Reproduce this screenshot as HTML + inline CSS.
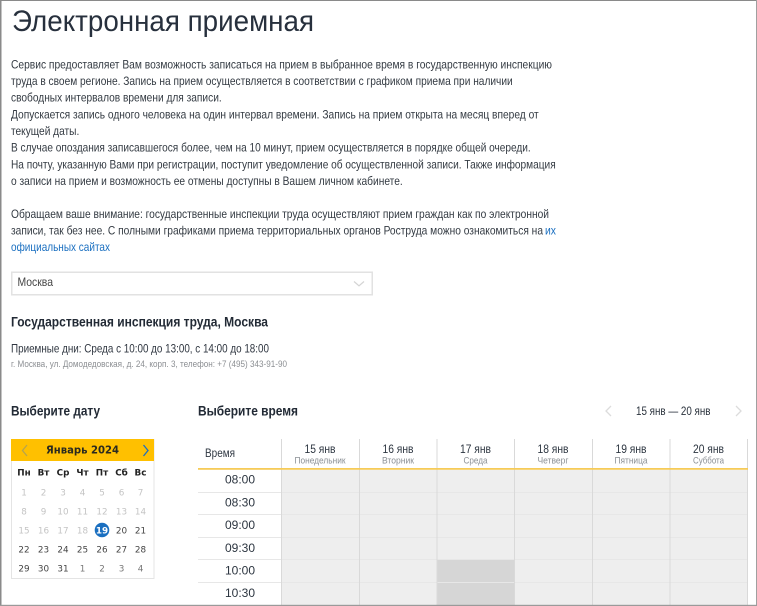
<!DOCTYPE html>
<html lang="ru">
<head>
<meta charset="utf-8">
<title>Электронная приемная</title>
<style>
html,body{margin:0;padding:0;background:#fff}
body{width:757px;height:606px;overflow:hidden}
svg{display:block;filter:blur(.3px)}
text{font-family:"Liberation Sans",sans-serif}
.p{font-size:12px;fill:#333a42}
.h{font-size:14px;font-weight:bold;fill:#222a35}
.t{font-size:12px;fill:#2c3540;text-anchor:middle}
.s{font-size:9.5px;fill:#8a8f94;text-anchor:middle}
.d{font-family:"DejaVu Sans",sans-serif;font-size:8.800px;text-anchor:middle;fill:#444}
.o{fill:#c4c4c4}
.w{font-weight:bold;fill:#222}
</style>
</head>
<body>
<svg width="757" height="606" viewBox="0 0 757 606" xmlns="http://www.w3.org/2000/svg">
<rect width="757" height="606" fill="#fff"/>

<text x="12" y="31" font-size="29.500" fill="#27303d" textLength="302" lengthAdjust="spacingAndGlyphs">Электронная приемная</text>

<text class="p" x="11" y="68.300" textLength="541" lengthAdjust="spacingAndGlyphs">Сервис предоставляет Вам возможность записаться на прием в выбранное время в государственную инспекцию</text>
<text class="p" x="11" y="85" textLength="501.700" lengthAdjust="spacingAndGlyphs">труда в своем регионе. Запись на прием осуществляется в соответствии с графиком приема при наличии</text>
<text class="p" x="11" y="101.700" textLength="210.700" lengthAdjust="spacingAndGlyphs">свободных интервалов времени для записи.</text>
<text class="p" x="11" y="118.300" textLength="527.700" lengthAdjust="spacingAndGlyphs">Допускается запись одного человека на один интервал времени. Запись на прием открыта на месяц вперед от</text>
<text class="p" x="11" y="135" textLength="68.300" lengthAdjust="spacingAndGlyphs">текущей даты.</text>
<text class="p" x="11" y="151.700" textLength="519.700" lengthAdjust="spacingAndGlyphs">В случае опоздания записавшегося более, чем на 10 минут, прием осуществляется в порядке общей очереди.</text>
<text class="p" x="11" y="168.300" textLength="544.700" lengthAdjust="spacingAndGlyphs">На почту, указанную Вами при регистрации, поступит уведомление об осуществленной записи. Также информация</text>
<text class="p" x="11" y="185" textLength="391.700" lengthAdjust="spacingAndGlyphs">о записи на прием и возможность ее отмены доступны в Вашем личном кабинете.</text>

<text class="p" x="11" y="218" textLength="538" lengthAdjust="spacingAndGlyphs">Обращаем ваше внимание: государственные инспекции труда осуществляют прием граждан как по электронной</text>
<text class="p" x="11" y="234.500" textLength="532" lengthAdjust="spacingAndGlyphs">записи, так без нее. С полными графиками приема территориальных органов Роструда можно ознакомиться на</text>
<text class="p" x="545" y="234.500" textLength="11" lengthAdjust="spacingAndGlyphs" style="fill:#1a6fc0">их</text>
<text class="p" x="11" y="251" textLength="99" lengthAdjust="spacingAndGlyphs" style="fill:#1a6fc0">официальных сайтах</text>

<rect x="11.750" y="272.250" width="360.500" height="22.500" fill="#fff" stroke="#e2e2e2" stroke-width="1.500"/>
<text class="p" x="17.500" y="286" textLength="35.500" lengthAdjust="spacingAndGlyphs" style="fill:#444">Москва</text>
<path d="M354 281.500L359 285.800L364 281.500" fill="none" stroke="#d4d4d4" stroke-width="1.200"/>

<text class="h" x="11" y="326.500" textLength="257" lengthAdjust="spacingAndGlyphs">Государственная инспекция труда, Москва</text>
<text class="p" x="11" y="352.500" textLength="258" lengthAdjust="spacingAndGlyphs" style="fill:#2f3640">Приемные дни: Среда с 10:00 до 13:00, с 14:00 до 18:00</text>
<text x="11" y="367" font-size="9.300" fill="#8c8f93" textLength="276" lengthAdjust="spacingAndGlyphs">г. Москва, ул. Домодедовская, д. 24, корп. 3, телефон: +7 (495) 343-91-90</text>

<text class="h" x="11" y="415.500" textLength="89" lengthAdjust="spacingAndGlyphs">Выберите дату</text>
<text class="h" x="198" y="415.500" textLength="100" lengthAdjust="spacingAndGlyphs">Выберите время</text>

<path d="M611 406L606 411L611 416" fill="none" stroke="#dcdcdc" stroke-width="1.300"/>
<text x="636" y="415" font-size="12" fill="#2a323c" textLength="74.500" lengthAdjust="spacingAndGlyphs">15 янв — 20 янв</text>
<path d="M736 406L741 411L736 416" fill="none" stroke="#dcdcdc" stroke-width="1.300"/>

<!-- calendar -->
<rect x="11.500" y="439.500" width="142.500" height="139" fill="#fff" stroke="#e4e4e4"/>
<rect x="11" y="439" width="143" height="22" fill="#ffc000"/>
<path d="M27 445L22.500 450.500L27 456" fill="none" stroke="#b6a44e" stroke-width="1.300"/>
<path d="M143.500 445L148 450.500L143.500 456" fill="none" stroke="#1f6fc0" stroke-width="1.300"/>
<text x="46" y="453.500" style="font-family:'DejaVu Sans',sans-serif" font-size="11" font-weight="bold" fill="#2a2a20" textLength="73" lengthAdjust="spacingAndGlyphs">Январь 2024</text>

<g>
<text class="d w" x="24" y="475.500">Пн</text><text class="d w" x="43.500" y="475.500">Вт</text><text class="d w" x="63" y="475.500">Ср</text><text class="d w" x="82.500" y="475.500">Чт</text><text class="d w" x="102" y="475.500">Пт</text><text class="d w" x="121.500" y="475.500">Сб</text><text class="d w" x="140.500" y="475.500">Вс</text>
</g>
<g>
<text class="d o" x="24" y="495.500">1</text><text class="d o" x="43.500" y="495.500">2</text><text class="d o" x="63" y="495.500">3</text><text class="d o" x="82.500" y="495.500">4</text><text class="d o" x="102" y="495.500">5</text><text class="d o" x="121.500" y="495.500">6</text><text class="d o" x="140.500" y="495.500">7</text>
<text class="d o" x="24" y="514.500">8</text><text class="d o" x="43.500" y="514.500">9</text><text class="d o" x="63" y="514.500">10</text><text class="d o" x="82.500" y="514.500">11</text><text class="d o" x="102" y="514.500">12</text><text class="d o" x="121.500" y="514.500">13</text><text class="d o" x="140.500" y="514.500">14</text>
<text class="d o" x="24" y="533.500">15</text><text class="d o" x="43.500" y="533.500">16</text><text class="d o" x="63" y="533.500">17</text><text class="d o" x="82.500" y="533.500">18</text>
<circle cx="102" cy="530" r="7.300" fill="#1a6fc0"/>
<text class="d" x="102" y="533.500" font-weight="bold" style="fill:#fff">19</text>
<text class="d" x="121.500" y="533.500">20</text><text class="d" x="140.500" y="533.500">21</text>
<text class="d" x="24" y="552.500">22</text><text class="d" x="43.500" y="552.500">23</text><text class="d" x="63" y="552.500">24</text><text class="d" x="82.500" y="552.500">25</text><text class="d" x="102" y="552.500">26</text><text class="d" x="121.500" y="552.500">27</text><text class="d" x="140.500" y="552.500">28</text>
<text class="d" x="24" y="571.500">29</text><text class="d" x="43.500" y="571.500">30</text><text class="d" x="63" y="571.500">31</text><text class="d" x="82.500" y="571.500" style="fill:#777">1</text><text class="d" x="102" y="571.500" style="fill:#777">2</text><text class="d" x="121.500" y="571.500" style="fill:#777">3</text><text class="d" x="140.500" y="571.500" style="fill:#777">4</text>
</g>

<!-- table -->
<rect x="281" y="470" width="467" height="136" fill="#eeeeee"/>
<rect x="437.500" y="560" width="77" height="46" fill="#d6d6d6"/>
<g fill="#e7e7e7">
<rect x="198" y="492" width="550" height="1"/>
<rect x="198" y="514" width="550" height="1"/>
<rect x="198" y="537" width="550" height="1"/>
<rect x="198" y="559" width="550" height="1"/>
<rect x="198" y="582" width="550" height="1"/>
</g>
<g fill="#d9d9d9">
<rect x="281" y="439" width="1" height="167"/>
<rect x="359" y="439" width="1" height="167"/>
<rect x="436.500" y="439" width="1" height="167"/>
<rect x="514" y="439" width="1" height="167"/>
<rect x="592" y="439" width="1" height="167"/>
<rect x="669.500" y="439" width="1" height="167"/>
<rect x="747" y="439" width="1" height="167"/>
</g>
<rect x="198" y="468" width="550" height="1.800" fill="#f6cb58"/>

<text x="205" y="457" font-size="12" fill="#2f3742" textLength="30" lengthAdjust="spacingAndGlyphs">Время</text>
<text class="t" x="320" y="453" textLength="31" lengthAdjust="spacingAndGlyphs">15 янв</text><text class="s" x="320" y="463.500" textLength="51" lengthAdjust="spacingAndGlyphs">Понедельник</text>
<text class="t" x="398" y="453" textLength="31" lengthAdjust="spacingAndGlyphs">16 янв</text><text class="s" x="398" y="463.500" textLength="32" lengthAdjust="spacingAndGlyphs">Вторник</text>
<text class="t" x="475.500" y="453" textLength="31" lengthAdjust="spacingAndGlyphs">17 янв</text><text class="s" x="475.500" y="463.500" textLength="24" lengthAdjust="spacingAndGlyphs">Среда</text>
<text class="t" x="553" y="453" textLength="31" lengthAdjust="spacingAndGlyphs">18 янв</text><text class="s" x="553" y="463.500" textLength="31" lengthAdjust="spacingAndGlyphs">Четверг</text>
<text class="t" x="631" y="453" textLength="31" lengthAdjust="spacingAndGlyphs">19 янв</text><text class="s" x="631" y="463.500" textLength="33" lengthAdjust="spacingAndGlyphs">Пятница</text>
<text class="t" x="708.500" y="453" textLength="31" lengthAdjust="spacingAndGlyphs">20 янв</text><text class="s" x="708.500" y="463.500" textLength="31" lengthAdjust="spacingAndGlyphs">Суббота</text>

<text class="t" x="240" y="483.500">08:00</text>
<text class="t" x="240" y="506.500">08:30</text>
<text class="t" x="240" y="529">09:00</text>
<text class="t" x="240" y="552">09:30</text>
<text class="t" x="240" y="574.500">10:00</text>
<text class="t" x="240" y="597">10:30</text>

<!-- outer frame -->
<rect x="0" y="0" width="757" height="1" fill="#8a8a8a"/>
<rect x="0" y="0" width="1.500" height="606" fill="#8a8a8a"/>
<rect x="756" y="0" width="1" height="606" fill="#a0a0a0"/>
<rect x="0" y="604.800" width="757" height="1.200" fill="#9a9a9a"/>
</svg>
</body>
</html>
